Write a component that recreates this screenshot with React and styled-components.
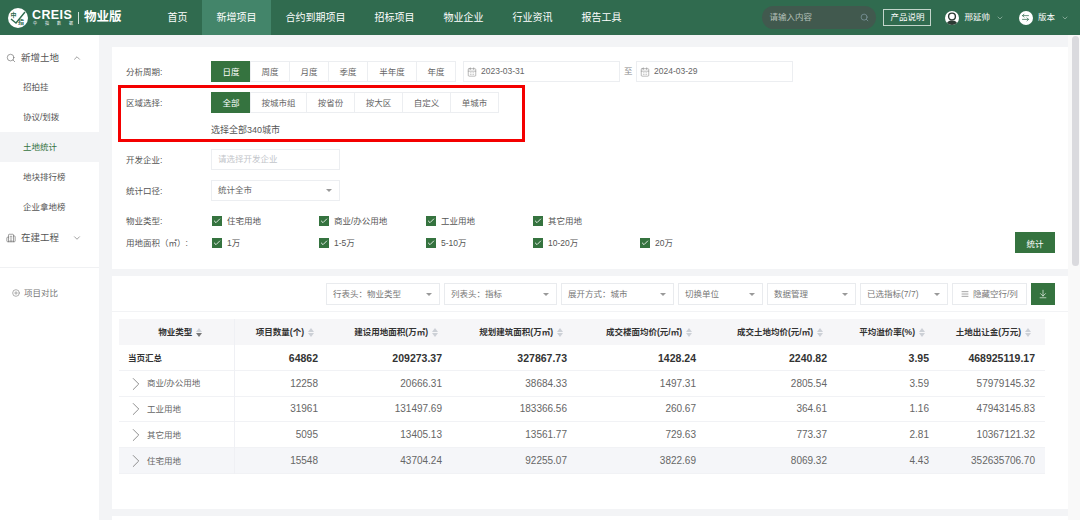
import React from 'react';
import styled, { createGlobalStyle } from 'styled-components';
import { Search, ChevronUp, ChevronDown, ChevronRight, Building2, CirclePlus, CalendarDays, ArrowDownToLine, AlignJustify, Check, ArrowLeftRight } from 'lucide-react';

const green = '#35733f';
const font = '"Liberation Sans", "Noto Sans CJK SC", sans-serif';

const Global = createGlobalStyle`
  html, body { margin: 0; padding: 0; background: #f3f4f6; }
  * { box-sizing: border-box; }
  body { font-family: ${font}; color: #555; line-height: 1; -webkit-font-smoothing: antialiased; }
`;

const Page = styled.div`
  position: relative;
  width: 1080px;
  height: 520px;
  overflow: hidden;
  background: #f3f4f6;
`;
const Header = styled.header`
  height: 35px;
  background: #306b4f;
  display: flex;
  align-items: center;
  color: #fff;
`;
const Logo = styled.div`
  width: 153px;
  padding-left: 8px;
  display: flex;
  align-items: center;
  flex: none;
`;
const LogoMark = styled.svg`
  width: 20px;
  height: 20px;
  flex: none;
`;
const LogoWords = styled.div`
  margin-left: 4px;
  width: 42px;
  display: flex;
  flex-direction: column;
`;
const LogoName = styled.span`
  font-size: 12.5px;
  font-weight: 700;
  letter-spacing: 0.4px;
  line-height: 12px;
`;
const LogoSub = styled.span`
  font-size: 4px;
  line-height: 5px;
  display: flex;
  justify-content: space-between;
  padding: 0 1px;
`;
const LogoRule = styled.i`
  width: 1px;
  height: 12px;
  background: #cfe0d7;
  margin: 0 5px 0 4px;
`;
const Edition = styled.span`
  font-size: 12.5px;
  font-weight: 700;
`;
const Nav = styled.nav`
  display: flex;
  height: 100%;
`;
const NavItem = styled.a`
  display: flex;
  align-items: center;
  padding: 0 14.5px;
  font-size: 10px;
  background: ${p => (p.$active ? '#43856a' : 'transparent')};
`;
const HeaderRight = styled.div`
  margin-left: auto;
  display: flex;
  align-items: center;
  padding-right: 11px;
`;
const SearchBox = styled.div`
  width: 114px;
  height: 23px;
  border-radius: 12px;
  background: #41594e;
  display: flex;
  align-items: center;
  justify-content: space-between;
  padding: 0 7px;
  font-size: 8.5px;
  color: #b4c0ba;
  svg { color: #7f98a0; }
`;
const ProductBtn = styled.div`
  margin-left: 7px;
  width: 48px;
  height: 17px;
  border: 1px solid #c3d5cb;
  font-size: 8.5px;
  display: flex;
  align-items: center;
  justify-content: center;
`;
const UserItem = styled.div`
  display: flex;
  align-items: center;
  font-size: 8.5px;
  margin-left: ${p => p.$gap}px;
  svg.arrow { margin-left: 6px; color: #a9c2b5; }
`;
const RoundIcon = styled.span`
  width: 14px;
  height: 14px;
  border-radius: 50%;
  background: #fff;
  margin-right: 5px;
  color: #306b4f;
  display: flex;
  align-items: center;
  justify-content: center;
  overflow: hidden;
`;

const Body = styled.div`
  display: flex;
  height: 485px;
`;
const Sidebar = styled.aside`
  width: 99px;
  flex: none;
  background: #fff;
  padding-top: 8px;
  font-size: 8.5px;
`;
const Group = styled.div`
  height: 29px;
  margin-top: ${p => p.$top || 0}px;
  display: flex;
  align-items: center;
  padding: 0 17px 0 6px;
  font-size: 9.5px;
  color: #555;
  span { margin-left: 5px; flex: 1; }
  svg { color: #666; }
`;
const SideItem = styled.div`
  height: 30px;
  display: flex;
  align-items: center;
  padding-left: 23px;
  color: ${p => (p.$active ? green : '#555')};
  background: ${p => (p.$active ? '#f3f4f6' : 'transparent')};
`;
const SideRule = styled.div`
  height: 1px;
  background: #f0f1f3;
  margin-top: 15px;
`;
const SideLink = styled.div`
  display: flex;
  align-items: center;
  gap: 4px;
  padding: 21px 0 0 12px;
  color: #777;
  svg { color: #888; }
`;

const Main = styled.main`
  flex: 1;
  padding: 12px 12px 0 13px;
  display: flex;
  flex-direction: column;
  gap: 7px;
`;
const FilterCard = styled.section`
  position: relative;
  background: #fff;
  height: 222px;
  flex: none;
  padding: 14px 14px 0 14px;
  font-size: 8.5px;
`;
const Row = styled.div`
  display: flex;
  align-items: center;
  height: 21px;
  margin-top: ${p => p.$top || 0}px;
`;
const Label = styled.div`
  width: 85px;
  flex: none;
  padding-top: 1px;
  color: #555;
  font-size: 8.5px;
`;
const Segments = styled.div`
  display: flex;
`;
const Segment = styled.div`
  width: ${p => p.$w}px;
  height: 21px;
  display: flex;
  align-items: center;
  justify-content: center;
  padding-top: 1px;
  margin-left: -1px;
  border: 1px solid ${p => (p.$active ? green : '#eceef1')};
  background: ${p => (p.$active ? green : '#fff')};
  color: ${p => (p.$active ? '#fff' : '#666')};
  &:first-child { margin-left: 0; }
`;
const DateBox = styled.div`
  width: 157px;
  height: 21px;
  border: 1px solid #eceef1;
  display: flex;
  align-items: center;
  padding-left: 3px;
  gap: 4px;
  color: #666;
  margin-left: ${p => p.$left}px;
  svg { color: #888; }
`;
const To = styled.span`
  margin-left: 4px;
  color: #888;
  width: 12px;
`;
const Note = styled.div`
  margin: 11px 0 0 85px;
  height: 12px;
  line-height: 12px;
  font-size: 9px;
  color: #555;
`;
const InputBox = styled.div`
  width: 129px;
  height: 21px;
  border: 1px solid #eceef1;
  display: flex;
  align-items: center;
  justify-content: space-between;
  padding: 0 7px 0 6px;
  color: ${p => (p.$muted ? '#c2c5ca' : '#666')};
`;
const Caret = styled.i`
  width: 0;
  height: 0;
  border-left: 3px solid transparent;
  border-right: 3px solid transparent;
  border-top: 3px solid #999;
  flex: none;
`;
const CheckRow = styled.div`
  display: flex;
  align-items: center;
  height: 22px;
  margin-top: ${p => p.$top || 0}px;
`;
const CheckItem = styled.div`
  width: 107px;
  display: flex;
  align-items: center;
  gap: 5px;
  color: #555;
`;
const Box = styled.span`
  width: 10px;
  height: 10px;
  background: ${green};
  color: #fff;
  display: flex;
  align-items: center;
  justify-content: center;
  margin-left: 1px;
`;
const SubmitBtn = styled.button`
  position: absolute;
  right: 13px;
  top: 185px;
  width: 40px;
  height: 21px;
  border: 0;
  padding: 0;
  background: ${green};
  color: #fff;
  font: 8.5px ${font};
`;
const Highlight = styled.div`
  position: absolute;
  left: 6px;
  top: 38px;
  width: 407px;
  height: 57px;
  border: 3px solid #f40000;
  pointer-events: none;
`;

const TableCard = styled.section`
  background: #fff;
  height: 233px;
  flex: none;
`;
const Toolbar = styled.div`
  height: 36px;
  padding: 7px 13px 0 0;
  border-bottom: 1px solid #f2f3f5;
  display: flex;
  justify-content: flex-end;
  gap: 4px;
  font-size: 8.5px;
`;
const Drop = styled.div`
  width: ${p => p.$w}px;
  height: 22px;
  border: 1px solid #e9ebee;
  display: flex;
  align-items: center;
  justify-content: space-between;
  padding: 0 7px 0 6px;
  color: #777;
`;
const HideBtn = styled.div`
  width: 75px;
  height: 22px;
  border: 1px solid #e9ebee;
  display: flex;
  align-items: center;
  gap: 4px;
  padding-left: 8px;
  color: #777;
  svg { color: #777; }
`;
const DownloadBtn = styled.div`
  width: 24px;
  height: 22px;
  background: ${green};
  color: #fff;
  display: flex;
  align-items: center;
  justify-content: center;
`;
const TableWrap = styled.div`
  padding: 7px 0 0 7px;
`;
const Table = styled.table`
  width: 926px;
  table-layout: fixed;
  border-collapse: collapse;
`;
const Th = styled.th`
  height: 25.7px;
  padding: ${p => (p.$first ? '1px 0 0 8px' : '1px 10px 0 0')};
  background: #f6f6f8;
  font-size: 8.5px;
  font-weight: 700;
  color: #333;
  text-align: ${p => (p.$first ? 'center' : 'right')};
  border-right: ${p => (p.$first ? '1px solid #eff0f4' : 'none')};
`;
const Sorter = styled.span`
  display: inline-flex;
  flex-direction: column;
  gap: 1px;
  vertical-align: 3px;
  margin-left: 4px;
  margin-right: ${p => (p.$first ? 0 : 4)}px;
  &::before, &::after {
    content: '';
    width: 0;
    height: 0;
    border-left: 3px solid transparent;
    border-right: 3px solid transparent;
  }
  &::before { border-bottom: 4px solid #ccd0d6; }
  &::after { border-top: 4px solid ${p => (p.$first ? '#777' : '#ccd0d6')}; }
`;
const Tr = styled.tr`
  background: ${p => (p.$hl ? '#f5f6f9' : 'transparent')};
  border-bottom: 1px solid #f1f2f5;
`;
const Td = styled.td`
  height: 25.7px;
  padding: 1px 10px 0 0;
  text-align: right;
  font-size: ${p => (p.$total ? '10.5px' : '10px')};
  font-weight: ${p => (p.$total ? 600 : 400)};
  color: ${p => (p.$total ? '#333' : '#666')};
`;
const NameTd = styled.td`
  padding: 1px 0 0 ${p => (p.$total ? 9 : 6)}px;
  font-size: 8.5px;
  font-weight: ${p => (p.$total ? 600 : 400)};
  color: ${p => (p.$total ? '#333' : '#666')};
  border-right: 1px solid #eff0f4;
`;
const NameInner = styled.div`
  display: flex;
  align-items: center;
  svg { color: #777; flex: none; }
`;
const LowerCard = styled.section`
  background: #fff;
  height: 30px;
  flex: none;
`;
const Scrollbar = styled.div`
  position: absolute;
  top: 35px;
  right: 0;
  width: 12px;
  height: 485px;
  background: #f9f9f9;
  &::after {
    content: '';
    position: absolute;
    top: 1px;
    left: 4px;
    width: 7px;
    height: 230px;
    border-radius: 4px;
    background: #dadade;
  }
`;

const navs = ['首页', '新增项目', '合约到期项目', '招标项目', '物业企业', '行业资讯', '报告工具'];
const sideItems = ['招拍挂', '协议/划拨', '土地统计', '地块排行榜', '企业拿地榜'];
const periods = [['日度', 40], ['周度', 40], ['月度', 40], ['季度', 40], ['半年度', 50], ['年度', 40]];
const regions = [['全部', 40], ['按城市组', 57], ['按省份', 49], ['按大区', 49], ['自定义', 49], ['单城市', 49]];
const propTypes = ['住宅用地', '商业/办公用地', '工业用地', '其它用地'];
const areas = ['1万', '1-5万', '5-10万', '10-20万', '20万'];
const drops = [['行表头：物业类型', 114], ['列表头：指标', 113], ['展开方式：城市', 113], ['切换单位', 85], ['数据管理', 89], ['已选指标(7/7)', 88]];
const cols = [
  ['物业类型', 115], ['项目数量(个)', 94], ['建设用地面积(万㎡)', 124], ['规划建筑面积(万㎡)', 125],
  ['成交楼面均价(元/㎡)', 129], ['成交土地均价(元/㎡)', 131], ['平均溢价率(%)', 102], ['土地出让金(万元)', 106],
];
const totals = ['64862', '209273.37', '327867.73', '1428.24', '2240.82', '3.95', '468925119.17'];
const rows = [
  ['商业/办公用地', '12258', '20666.31', '38684.33', '1497.31', '2805.54', '3.59', '57979145.32'],
  ['工业用地', '31961', '131497.69', '183366.56', '260.67', '364.61', '1.16', '47943145.83'],
  ['其它用地', '5095', '13405.13', '13561.77', '729.63', '773.37', '2.81', '10367121.32'],
  ['住宅用地', '15548', '43704.24', '92255.07', '3822.69', '8069.32', '4.43', '352635706.70'],
];

const Checks = ({ items, top, label }) => (
  <CheckRow $top={top}>
    <Label>{label}</Label>
    {items.map(t => (
      <CheckItem key={t}>
        <Box><Check size={8} strokeWidth={2.5} /></Box>
        {t}
      </CheckItem>
    ))}
  </CheckRow>
);

const App = () => (
  <Page>
    <Global />
    <Header>
      <Logo>
        <LogoMark viewBox="0 0 20 20">
          <circle cx="10" cy="10" r="10" fill="#fff" />
          <path d="M3 11 L8 15 L17 4" fill="none" stroke="#306b4f" strokeWidth="1.4" />
          <text x="2.5" y="9" fontSize="6" fontWeight="700" fill="#306b4f">中</text>
          <text x="10" y="16" fontSize="6" fontWeight="700" fill="#306b4f">指</text>
        </LogoMark>
        <LogoWords>
          <LogoName>CREIS</LogoName>
          <LogoSub><span>中</span><span>指</span><span>数</span><span>据</span></LogoSub>
        </LogoWords>
        <LogoRule />
        <Edition>物业版</Edition>
      </Logo>
      <Nav>
        {navs.map((n, i) => <NavItem key={n} $active={i === 1}>{n}</NavItem>)}
      </Nav>
      <HeaderRight>
        <SearchBox>请输入内容<Search size={9} /></SearchBox>
        <ProductBtn>产品说明</ProductBtn>
        <UserItem $gap={14}>
          <RoundIcon>
            <svg width="14" height="14" viewBox="0 0 14 14">
              <circle cx="7" cy="5.5" r="3.4" fill="none" stroke="#2b3a33" strokeWidth="1.4" />
              <path d="M1.5 14 C2 10 5 9.5 7 9.5 C9 9.5 12 10 12.5 14 Z" fill="#2b3a33" />
            </svg>
          </RoundIcon>
          邢延帅
          <ChevronDown className="arrow" size={8} />
        </UserItem>
        <UserItem $gap={15}>
          <RoundIcon><ArrowLeftRight size={9} strokeWidth={2} /></RoundIcon>
          版本
          <ChevronDown className="arrow" size={8} />
        </UserItem>
      </HeaderRight>
    </Header>
    <Body>
      <Sidebar>
        <Group><Search size={10} strokeWidth={1.5} /><span>新增土地</span><ChevronUp size={10} strokeWidth={1.5} /></Group>
        {sideItems.map(s => <SideItem key={s} $active={s === '土地统计'}>{s}</SideItem>)}
        <Group $top={1}><Building2 size={10} strokeWidth={1.5} /><span>在建工程</span><ChevronDown size={10} strokeWidth={1.5} /></Group>
        <SideRule />
        <SideLink><CirclePlus size={8} />项目对比</SideLink>
      </Sidebar>
      <Main>
        <FilterCard>
          <Row>
            <Label>分析周期:</Label>
            <Segments>
              {periods.map(([t, w], i) => <Segment key={t} $w={w} $active={i === 0}>{t}</Segment>)}
            </Segments>
            <DateBox $left={7}><CalendarDays size={10} strokeWidth={1.4} />2023-03-31</DateBox>
            <To>至</To>
            <DateBox $left={0}><CalendarDays size={10} strokeWidth={1.4} />2024-03-29</DateBox>
          </Row>
          <Row $top={10}>
            <Label>区域选择:</Label>
            <Segments>
              {regions.map(([t, w], i) => <Segment key={t} $w={w} $active={i === 0}>{t}</Segment>)}
            </Segments>
          </Row>
          <Note>选择全部340城市</Note>
          <Row $top={13}>
            <Label>开发企业:</Label>
            <InputBox $muted>请选择开发企业</InputBox>
          </Row>
          <Row $top={10}>
            <Label>统计口径:</Label>
            <InputBox>统计全市<Caret /></InputBox>
          </Row>
          <Checks label="物业类型:" items={propTypes} top={9} />
          <Checks label="用地面积（㎡）:" items={areas} top={0} />
          <SubmitBtn>统计</SubmitBtn>
          <Highlight />
        </FilterCard>
        <TableCard>
          <Toolbar>
            {drops.map(([t, w]) => <Drop key={t} $w={w}>{t}<Caret /></Drop>)}
            <HideBtn><AlignJustify size={8} />隐藏空行/列</HideBtn>
            <DownloadBtn><ArrowDownToLine size={10} strokeWidth={1.5} /></DownloadBtn>
          </Toolbar>
          <TableWrap>
            <Table>
              <colgroup>
                {cols.map(([t, w]) => <col key={t} width={w} />)}
              </colgroup>
              <thead>
                <tr>
                  {cols.map(([t], i) => (
                    <Th key={t} $first={i === 0}>{t}<Sorter $first={i === 0} /></Th>
                  ))}
                </tr>
              </thead>
              <tbody>
                <Tr>
                  <NameTd $total>当页汇总</NameTd>
                  {totals.map(v => <Td key={v} $total>{v}</Td>)}
                </Tr>
                {rows.map((r, i) => (
                  <Tr key={r[0]} $hl={i === 3}>
                    <NameTd>
                      <NameInner><ChevronRight size={22} strokeWidth={0.9} />{r[0]}</NameInner>
                    </NameTd>
                    {r.slice(1).map(v => <Td key={v}>{v}</Td>)}
                  </Tr>
                ))}
              </tbody>
            </Table>
          </TableWrap>
        </TableCard>
        <LowerCard />
      </Main>
    </Body>
    <Scrollbar />
  </Page>
);

export default App;
